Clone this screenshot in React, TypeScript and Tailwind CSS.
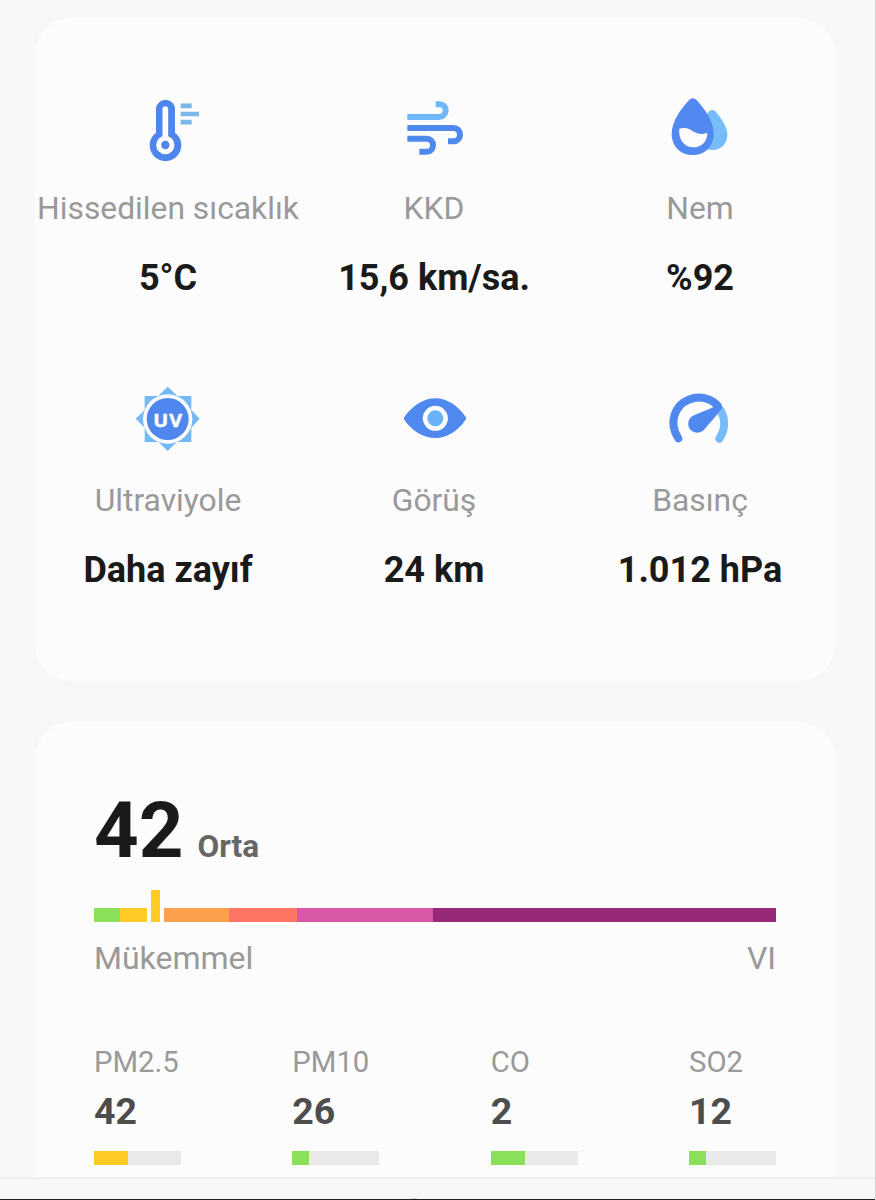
import type { ReactNode } from "react";

function ThermometerIcon() {
  return (
    <svg className="w-[90px] h-[90px]" viewBox="-21 0 270 270" fill="none">
      <path
        d="M78 73a28.500 28.500 0 0 1 57 0v70a47.500 47.500 0 1 1-57 0z"
        fill="#4e86ee"
      />
      <path d="M106 72v82" stroke="#fcfcfc" strokeWidth="17" strokeLinecap="round" />
      <circle cx="106" cy="180" r="27.500" fill="#fcfcfc" />
      <circle cx="106" cy="180" r="12.500" fill="#4e86ee" />
      <path d="M152 62.500h33M152 87h55M152 111.500h33" stroke="#78b8ea" strokeWidth="14" />
    </svg>
  );
}

function WindIcon() {
  return (
    <svg className="w-[90px] h-[90px]" viewBox="-3 0 270 270" fill="none" strokeWidth="18">
      <path d="M52 96h95a20 20 0 0 0 20-20c0-11-8-18.500-18-18.500h-12" stroke="#6fb7f8" />
      <path d="M52 129h138c12 0 20 9 20 20s-8 19.500-20 19.500h-16" stroke="#5089ee" />
      <path d="M52 161.500h58c11 0 19 8 19 19s-8 20-19 20H88" stroke="#5089ee" />
    </svg>
  );
}

function HumidityIcon() {
  return (
    <svg className="w-[90px] h-[90px]" viewBox="0 0 270 270" fill="none">
      <path
        d="M163 78q10-7 18 1c18 21 36 47 36 70 0 27-19 46-44 46-28 0-43-18-43-46 0-22 15-50 33-71z"
        fill="#77bcfb"
      />
      <path
        d="M105 43q8-7 17 0c25 25 54 66 54 103 0 38-27 64-63 64s-63-26-63-64c0-37 30-78 55-103z"
        fill="#5189f1"
      />
      <path
        d="M73 131c9-3 22-3 31 2 18 12 30 18 53 10 1 25-17 44-42 44-27 0-46-25-42-56z"
        fill="#fcfcfc"
      />
    </svg>
  );
}

function UvIcon() {
  return (
    <svg className="w-[90px] h-[90px]" viewBox="0 6 270 270">
      <path
        d="M134 35l29 28h42v42l25 26-25 27v43h-44l-27 27-27-27H65v-43l-27-27 27-26V63h41z"
        fill="#73b8f7"
      />
      <circle cx="134" cy="132" r="74" fill="#fcfcfc" />
      <circle cx="134" cy="132" r="63" fill="#4f87ef" />
      <text
        x="136"
        y="155"
        textAnchor="middle"
        textLength="90"
        lengthAdjust="spacingAndGlyphs"
        fill="#fcfcfc"
        stroke="#fcfcfc"
        strokeWidth="1.5"
        className="font-['Open_Sans',sans-serif] font-bold text-[54px] tracking-[3px]"
      >
        UV
      </text>
    </svg>
  );
}

function EyeIcon() {
  return (
    <svg className="w-[90px] h-[90px]" viewBox="-3 6 270 270">
      <path
        d="M43 126C68 92 101 70 136 70s68 22 91 56q3 4 0 8c-25 35-56 55-91 55s-69-20-93-55q-3-4 0-8z"
        fill="#4f88ee"
      />
      <circle cx="136" cy="130" r="37.500" fill="#fcfcfc" />
      <circle cx="136" cy="130" r="24" fill="#69b2f8" />
    </svg>
  );
}

function PressureIcon() {
  return (
    <svg className="w-[90px] h-[90px]" viewBox="0 6 270 270" fill="none">
      <path
        d="M197 106c14 25 15 57-4 85"
        stroke="#77bcfa"
        strokeWidth="24"
        strokeLinecap="round"
      />
      <path
        d="M70 190C39 143 60 90 101 74c32-13 65-5 87 18"
        stroke="#4f88ee"
        strokeWidth="24"
        strokeLinecap="round"
      />
      <path
        d="M193 87l10 10c-22 30-41 50-54 65-12 14-30 14-41 4-12-12-11-34 5-43 19-10 51-19 80-36z"
        fill="#4f88ee"
      />
    </svg>
  );
}

const CONDITIONS: { icon: ReactNode; label: string; value: string }[] = [
  { icon: <ThermometerIcon />, label: "Hissedilen sıcaklık", value: "5°C" },
  { icon: <WindIcon />, label: "KKD", value: "15,6 km/sa." },
  { icon: <HumidityIcon />, label: "Nem", value: "%92" },
  { icon: <UvIcon />, label: "Ultraviyole", value: "Daha zayıf" },
  { icon: <EyeIcon />, label: "Görüş", value: "24 km" },
  { icon: <PressureIcon />, label: "Basınç", value: "1.012 hPa" },
];

const POLLUTANTS = [
  { label: "PM2.5", value: 42, fill: 34, color: "bg-[#ffca24]" },
  { label: "PM10", value: 26, fill: 17, color: "bg-[#8ae058]" },
  { label: "CO", value: 2, fill: 34, color: "bg-[#8ae058]" },
  { label: "SO2", value: 12, fill: 17, color: "bg-[#8ae058]" },
];

function AirQualityScale() {
  return (
    <div className="flex items-end h-8 mt-[17px]">
      <div className="w-[26px] h-3.5 bg-[#8ae058]" />
      <div className="w-[27px] h-3.5 bg-[#ffca24]" />
      <div className="w-[9px] h-8 mx-1 bg-[#ffca24]" />
      <div className="w-[65px] h-3.5 bg-[#fca04d]" />
      <div className="w-[68px] h-3.5 bg-[#ff7463]" />
      <div className="w-[136px] h-3.5 bg-[#d958a5]" />
      <div className="flex-1 h-3.5 bg-[#962a79]" />
    </div>
  );
}

export default function App() {
  return (
    <div className="w-[876px] h-[1200px] flex flex-col overflow-hidden bg-[#f7f7f7] border-r border-[#d4d4d4] font-['Roboto',sans-serif]">
      <section className="shrink-0 w-[800px] h-[663px] mt-[18px] ml-[35px] pt-[67px] rounded-[36px] bg-[#fcfcfc]">
        <div className="grid grid-cols-[266px_266px_266px] gap-y-[79px]">
          {CONDITIONS.map((item) => (
            <div key={item.label} className="flex flex-col items-center whitespace-nowrap">
              {item.icon}
              <span className="mt-[13px] text-[31.8px] leading-10 text-[#999999]">{item.label}</span>
              <span className="mt-[30px] text-[36px] leading-10 font-bold text-[#1a1a1a]">
                {item.value}
              </span>
            </div>
          ))}
        </div>
      </section>

      <section className="shrink-0 w-[800px] h-[455px] mt-[41px] ml-[35px] px-[59px] pt-[67px] rounded-t-[36px] bg-[#fcfcfc]">
        <div className="flex items-baseline h-[84px] leading-[83px]">
          <span className="text-[78px] font-bold text-[#1a1a1a]">42</span>
          <span className="ml-3.5 text-[31.5px] font-bold text-[#666666]">Orta</span>
        </div>
        <AirQualityScale />
        <div className="flex justify-between mt-4 text-[32px] leading-10 text-[#999999]">
          <span>Mükemmel</span>
          <span>VI</span>
        </div>
        <div className="flex justify-between mt-16">
          {POLLUTANTS.map((item) => (
            <div key={item.label} className="w-[87px] flex flex-col">
              <span className="text-[29.3px] leading-10 text-[#999999]">{item.label}</span>
              <span className="mt-[9px] text-[37.5px] leading-10 font-bold text-[#4d4d4d]">
                {item.value}
              </span>
              <div className="h-3.5 mt-5 bg-[#e9e9e9]">
                <div className={`h-full ${item.color}`} style={{ width: item.fill }} />
              </div>
            </div>
          ))}
        </div>
      </section>

      <footer className="flex-1 flex flex-col items-center justify-end bg-[#f7f7f7] border-t-2 border-t-[#eeeeee] border-b border-b-[#222222]">
        <div className="w-1.5 h-px mr-12 bg-[#cccccc]" />
      </footer>
    </div>
  );
}
